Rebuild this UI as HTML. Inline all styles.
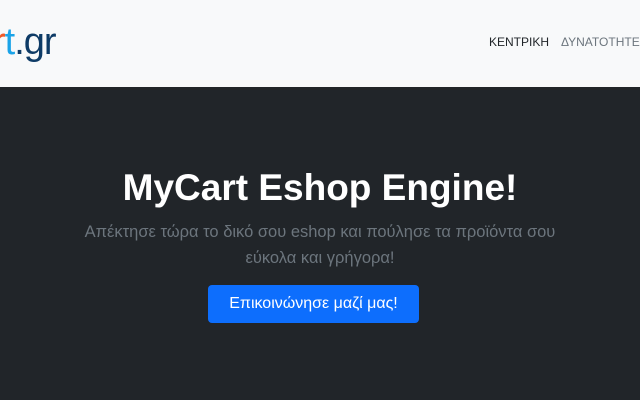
<!DOCTYPE html>
<html><head><meta charset="utf-8"><style>
body{margin:0;width:640px;height:400px;overflow:hidden;background:#212529;font-family:"Liberation Sans","DejaVu Sans",sans-serif}
.nav{position:absolute;left:0;top:0;width:640px;height:87px;background:#f8f9fa}
.logo{position:absolute;left:-7px;top:21px;font-size:38px;letter-spacing:-1px;white-space:nowrap}
.links{position:absolute;left:489px;top:35px;font-size:12px;white-space:nowrap}
.h{position:absolute;left:0;width:640px;text-align:center}
</style></head><body>
<div class="nav">
<div class="logo"><span style="color:#f05a28">r</span><span style="color:#1aa3e8">t</span><span style="color:#0e3b66">.gr</span></div>
<div class="links"><span style="color:#212529">ΚΕΝΤΡΙΚΗ</span><span style="color:#6c757d;margin-left:12px">ΔΥΝΑΤΟΤΗΤΕΣ</span></div>
</div>
<div class="h" style="top:167px;font-size:37px;font-weight:bold;color:#fff">MyCart Eshop Engine!</div>
<div class="h" style="top:219px;font-size:16.5px;line-height:26px;color:#6c757d">Απέκτησε τώρα το δικό σου eshop και πούλησε τα προϊόντα σου<br>εύκολα και γρήγορα!</div>
<div style="position:absolute;left:208px;top:285px;width:211px;height:38px;background:#0d6efd;border-radius:4px;color:#fff;font-size:16px;line-height:38px;text-align:center">Επικοινώνησε μαζί μας!</div>
</body></html>
